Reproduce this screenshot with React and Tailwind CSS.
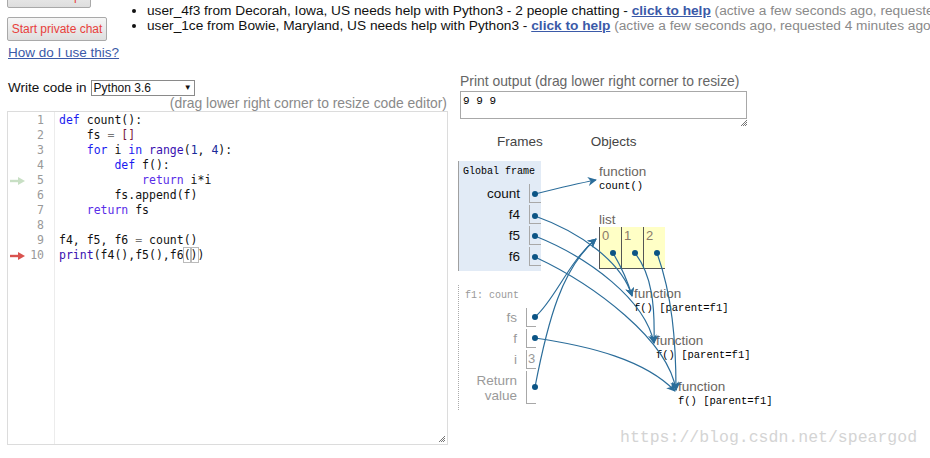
import React from 'react';

const SANS = 'font-[family-name:Liberation_Sans,Arial,sans-serif]';
const CODE = 'font-[family-name:DejaVu_Sans_Mono,monospace]';
const MONO = 'font-[family-name:Liberation_Mono,monospace]';

const KW = 'text-[#1b1bf0]';
const RET = 'text-[#5a2ee8]';
const BI = 'text-[#3a10b0]';
const NUM = 'text-[#1a2a9a]';
const OP = 'text-[#777]';
const BR = 'text-[#7a1a40]';

const CODE_LINES = [
  [['def', KW], [' count():']],
  [['    fs '], ['=', OP], [' '], ['[]', BR]],
  [['    '], ['for', KW], [' i '], ['in', KW], [' '], ['range', BI], ['('], ['1', NUM], [', '], ['4', NUM], ['):']],
  [['        '], ['def', KW], [' f():']],
  [['            '], ['return', RET], [' i*i']],
  [['        fs.append(f)']],
  [['    '], ['return', RET], [' fs']],
  [[' ']],
  [['f4, f5, f6 '], ['=', OP], [' count()']],
  null,
];

function GutterArrow({ color }) {
  return (
    <svg width="15" height="8" viewBox="0 0 15 8">
      <path d="M0 4 H9" stroke={color} strokeWidth="2.4" />
      <path d="M8 0 L15 4 L8 8 z" fill={color} />
    </svg>
  );
}

function Editor() {
  return (
    <div className="relative mt-[1px] h-[334px] border border-[#dcdcdc] flex">
      <div className="w-[47px] border-r border-[#ececec] pt-[1px]">
        {CODE_LINES.map((_, i) => (
          <div key={i} className={`flex items-center h-[15px] pl-[2px] ${CODE} text-[11.5px] text-[#999]`}>
            <div className="w-[15px] flex items-center">
              {i === 4 && <GutterArrow color="#c8dfc4" />}
              {i === 9 && <GutterArrow color="#d9534f" />}
            </div>
            <div className="flex-1 text-right pr-[10px] leading-[15px]">{i + 1}</div>
          </div>
        ))}
      </div>
      <div className={`pl-[4px] pt-[1px] ${CODE} text-[11.5px] text-[#111] whitespace-pre`}>
        {CODE_LINES.map((line, i) => (
          <div key={i} className="h-[15px] leading-[15px]">
            {line
              ? line.map(([t, c], j) => (
                  <span key={j} className={c || ''}>{t}</span>
                ))
              : (
                <>
                  <span className={BI}>print</span>(f4(),f5(),f6
                  <span className="outline outline-1 outline-[#bbb]">(</span>
                  <span className="outline outline-1 outline-[#bbb]">)</span>)
                </>
              )}
          </div>
        ))}
      </div>
      <svg className="absolute right-[2px] bottom-[2px]" width="7" height="7" viewBox="0 0 7 7">
        <path d="M1 7 L7 1 M3 7 L7 3 M5 7 L7 5" stroke="#777" strokeWidth="1" />
      </svg>
    </div>
  );
}

function Row({ label, h = 21, gray, cellW, labelW, children }) {
  return (
    <div className="flex" style={{ height: h }}>
      <div
        className={`text-right text-[13.5px] leading-[15px] flex flex-col justify-center ${gray ? 'text-[#9a9a9a]' : 'text-[#111]'}`}
        style={{ width: labelW }}
      >
        {label}
      </div>
      <div
        className="ml-[9px] mt-[1px] border-l border-b border-[#a8a8a8] text-[13px] text-[#999] pl-[1px] flex items-center"
        style={{ width: cellW, height: h - 2 }}
      >
        {children}
      </div>
    </div>
  );
}

function FuncObj({ className, name }) {
  return (
    <div className={`absolute ${className}`}>
      <div className="text-[13.5px] leading-[15px] text-[#6b6560]">function</div>
      <div className={`${MONO} text-[10.5px] leading-[15px] text-black whitespace-pre`}>{name}</div>
    </div>
  );
}

function Arrows() {
  const c = '#2b6d9a';
  const paths = [
    'M535,194 C555,189 575,184 596,180',
    'M535,216 C580,232 622,262 632,296',
    'M535,236 C590,258 645,300 654,343',
    'M535,257 C595,285 668,340 676,390',
    'M535,338 C590,346 645,360 675,391',
    'M535,317 C555,300 568,262 596,239',
    'M535,387 C548,320 562,268 596,239',
    'M613,253 C622,268 628,282 632,296',
    'M635,253 C652,275 655,305 654,343',
    'M657,253 C672,295 676,340 676,390',
  ];
  const dots = [
    [535, 194], [535, 216], [535, 236], [535, 257],
    [535, 317], [535, 338], [535, 387],
    [613, 253], [635, 253], [657, 253],
  ];
  return (
    <svg className="absolute left-0 top-0 pointer-events-none" width="930" height="458">
      <defs>
        <marker id="ah" viewBox="0 0 10 10" refX="9" refY="5" markerWidth="10" markerHeight="9" orient="auto" markerUnits="userSpaceOnUse">
          <path d="M0,0 L10,5 L0,10 L3,5 z" fill={c} />
        </marker>
      </defs>
      {paths.map((d, i) => (
        <path key={i} d={d} fill="none" stroke={c} strokeWidth="1.2" markerEnd="url(#ah)" />
      ))}
      {dots.map(([x, y], i) => (
        <circle key={i} cx={x} cy={y} r="3" fill="#0b5485" />
      ))}
    </svg>
  );
}

export default function App() {
  return (
    <div className={`relative w-[930px] h-[458px] overflow-hidden bg-white ${SANS}`}>
      <div className="-mt-[17px] flex">
        <div className="w-[125px] shrink-0 pl-[7px] flex flex-col items-start">
          <button className="h-[25px] w-[84px] border border-[#a9a9a9] rounded-[2px] bg-gradient-to-b from-[#f6f6f6] to-[#dedede] text-[12px] text-[#e8413c]">
            Get live help!
          </button>
          <button className="mt-[9px] h-[24px] w-[100px] border border-[#a9a9a9] rounded-[2px] bg-gradient-to-b from-[#f6f6f6] to-[#dedede] text-[12px] text-[#e8413c]">
            Start private chat
          </button>
          <a href="#" className="mt-[5px] ml-[1px] leading-[14px] text-[13.5px] text-[#3b5aa8] underline">
            How do I use this?
          </a>
        </div>
        <ul className="mt-[20px] list-disc pl-[22px] text-[13.7px] leading-[15px] text-[#111] whitespace-nowrap">
          <li>
            user_4f3 from Decorah, Iowa, US needs help with Python3 - 2 people chatting -{' '}
            <a href="#" className="font-bold underline text-[#3b5aa8]">click to help</a>{' '}
            <span className="text-[#8a8a8a]">(active a few seconds ago, requested 6 minutes ago)</span>
          </li>
          <li>
            user_1ce from Bowie, Maryland, US needs help with Python3 -{' '}
            <a href="#" className="font-bold underline text-[#3b5aa8]">click to help</a>{' '}
            <span className="text-[#8a8a8a]">(active a few seconds ago, requested 4 minutes ago)</span>
          </li>
        </ul>
      </div>

      <div className="mt-[14px] flex">
        <div className="w-[448px] shrink-0 pl-[7px]">
          <div className="mt-[6px] h-[16px] flex items-center text-[13.5px] text-[#111]">
            <span className="ml-[1px]">Write code in</span>
            <div className="ml-[4px] w-[104px] h-[16px] border border-[#8a8a8a] flex items-center justify-between px-[2px] text-[12px] leading-[14px]">
              <span>Python 3.6</span>
              <span className="text-[8px]">▼</span>
            </div>
          </div>
          <div className="text-right text-[13.9px] leading-[14px] text-[#8a8a8a] pr-[1px]">
            (drag lower right corner to resize code editor)
          </div>
          <Editor />
        </div>

        <div className="ml-[10px] flex-1">
          <div className="pl-[2px] text-[13.9px] leading-[14px] text-[#666]">
            Print output (drag lower right corner to resize)
          </div>
          <div className={`mt-[3px] ml-[2px] w-[287px] h-[28px] border border-[#a8a8a8] px-[2px] pt-[2px] ${MONO} text-[11px] leading-[14px]`}>
            9 9 9
          </div>
          <div className="w-[289px] h-[7px] flex justify-end">
            <svg width="7" height="7" viewBox="0 0 7 7">
              <path d="M1 7 L7 1 M3 7 L7 3 M5 7 L7 5" stroke="#777" strokeWidth="1" />
            </svg>
          </div>
          <div className="mt-[9px] flex text-[13.5px] leading-[14px] text-[#444]">
            <span className="ml-[39px]">Frames</span>
            <span className="ml-[48px]">Objects</span>
          </div>

          <div className="relative mt-[12px]">
            <div className="w-[83px] bg-[#e2ebf6] border-l border-[#a0a0a0] pb-[4px]">
              <div className={`h-[22px] pl-[4px] pt-[4px] ${MONO} text-[10px] leading-[14px] text-black`}>Global frame</div>
              <Row label="count" labelW={61} cellW={12} />
              <Row label="f4" labelW={61} cellW={12} />
              <Row label="f5" labelW={61} cellW={12} />
              <Row label="f6" labelW={61} cellW={12} />
            </div>
            <div className="mt-[14px] w-[83px] border-l border-dotted border-[#aaa] pb-[5px]">
              <div className={`h-[22px] pl-[6px] pt-[4px] ${MONO} text-[10px] leading-[14px] text-[#999]`}>f1: count</div>
              <Row label="fs" gray labelW={58} cellW={10} />
              <Row label="f" gray labelW={58} cellW={10} />
              <Row label="i" gray labelW={58} cellW={10}>3</Row>
              <Row label={<>Return<br />value</>} gray h={35} labelW={58} cellW={10} />
            </div>

            <FuncObj className="left-[141px] top-[3px]" name="count()" />
            <div className="absolute left-[141px] top-[51px]">
              <div className="text-[13.5px] leading-[15px] text-[#6b6560]">list</div>
              <div className="flex h-[42px] bg-[#ffffc6] border-b border-[#555]">
                {['0', '1', '2'].map(k => (
                  <div key={k} className="w-[22px] border-l border-[#555] pl-[2px] pt-[1px] text-[13px] leading-[15px] text-[#8a7a6a]">{k}</div>
                ))}
              </div>
            </div>
            <FuncObj className="left-[176px] top-[125px]" name="f() [parent=f1]" />
            <FuncObj className="left-[198px] top-[172px]" name="f() [parent=f1]" />
            <FuncObj className="left-[220px] top-[218px]" name="f() [parent=f1]" />
          </div>
        </div>
      </div>

      <Arrows />

      <div className={`absolute left-[620px] top-[429px] ${MONO} text-[16.5px] leading-[18px] text-[#d4d4d4] whitespace-nowrap`}>
        https://blog.csdn.net/speargod
      </div>
    </div>
  );
}
